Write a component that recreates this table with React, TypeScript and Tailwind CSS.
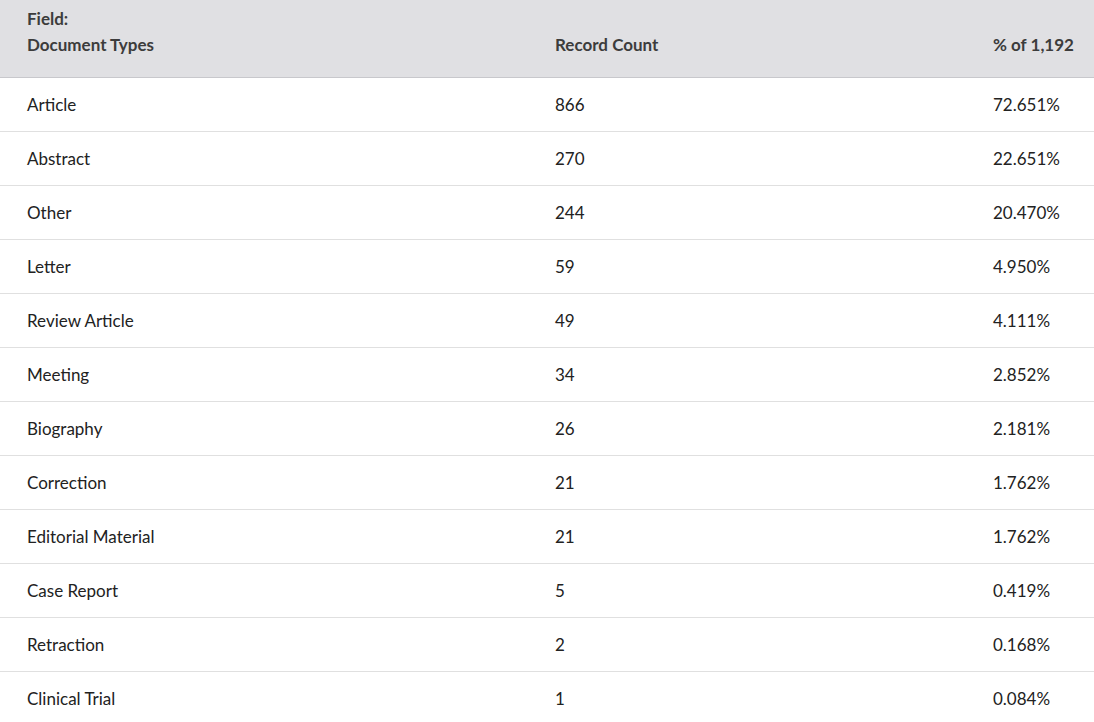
import React from "react";

const rows: [string, string, string][] = [
  ["Article", "866", "72.651%"],
  ["Abstract", "270", "22.651%"],
  ["Other", "244", "20.470%"],
  ["Letter", "59", "4.950%"],
  ["Review Article", "49", "4.111%"],
  ["Meeting", "34", "2.852%"],
  ["Biography", "26", "2.181%"],
  ["Correction", "21", "1.762%"],
  ["Editorial Material", "21", "1.762%"],
  ["Case Report", "5", "0.419%"],
  ["Retraction", "2", "0.168%"],
  ["Clinical Trial", "1", "0.084%"],
];

export default function App() {
  return (
    <div
      className="w-[1094px] h-[722px] overflow-hidden bg-white text-[17px] text-[#222]"
      style={{ fontFamily: "Lato, 'Liberation Sans', sans-serif" }}
    >
      <div className="flex items-end h-[78px] bg-[#e0e0e3] border-b border-[#c8c8cc] pb-[19px] font-bold text-[#3c3c3c] leading-[26px] whitespace-nowrap">
        <div className="w-[555px] shrink-0 pl-[27px]">
          <div>Field:</div>
          <div>Document Types</div>
        </div>
        <div className="w-[438px] shrink-0">Record Count</div>
        <div className="flex-1 text-right pr-[22px]">% of 1,192</div>
      </div>
      {rows.map(([name, count, pct]) => (
        <div
          key={name}
          className="flex items-center h-[54px] border-b border-[#e0e0e0] whitespace-nowrap"
        >
          <div className="w-[555px] shrink-0 pl-[27px]">{name}</div>
          <div className="w-[438px] shrink-0">{count}</div>
          <div className="flex-1">{pct}</div>
        </div>
      ))}
    </div>
  );
}
